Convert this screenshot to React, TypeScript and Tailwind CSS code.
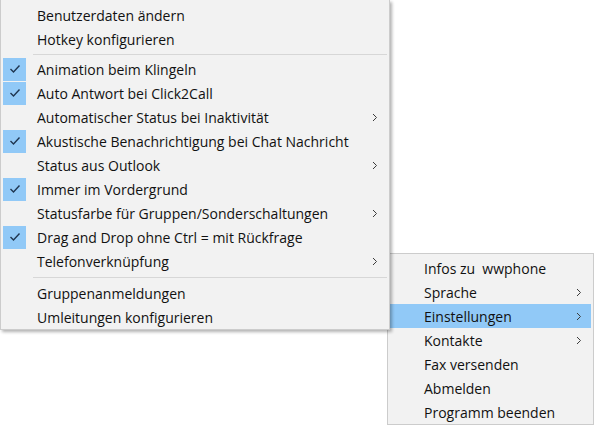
type Item =
	| { kind: "item"; label: string; checked?: boolean; sub?: boolean; active?: boolean }
	| { kind: "sep"; h: string };

const mainItems: Item[] = [
	{ kind: "item", label: "Benutzerdaten ändern" },
	{ kind: "item", label: "Hotkey konfigurieren" },
	{ kind: "sep", h: "h-[6px]" },
	{ kind: "item", label: "Animation beim Klingeln", checked: true },
	{ kind: "item", label: "Auto Antwort bei Click2Call", checked: true },
	{ kind: "item", label: "Automatischer Status bei Inaktivität", sub: true },
	{ kind: "item", label: "Akustische Benachrichtigung bei Chat Nachricht", checked: true },
	{ kind: "item", label: "Status aus Outlook", sub: true },
	{ kind: "item", label: "Immer im Vordergrund", checked: true },
	{ kind: "item", label: "Statusfarbe für Gruppen/Sonderschaltungen", sub: true },
	{ kind: "item", label: "Drag and Drop ohne Ctrl = mit Rückfrage", checked: true },
	{ kind: "item", label: "Telefonverknüpfung", sub: true },
	{ kind: "sep", h: "h-[8px]" },
	{ kind: "item", label: "Gruppenanmeldungen" },
	{ kind: "item", label: "Umleitungen konfigurieren" },
];

const rootItems: Item[] = [
	{ kind: "item", label: "Infos zu  wwphone" },
	{ kind: "item", label: "Sprache", sub: true },
	{ kind: "item", label: "Einstellungen", sub: true, active: true },
	{ kind: "item", label: "Kontakte", sub: true },
	{ kind: "item", label: "Fax versenden" },
	{ kind: "item", label: "Abmelden" },
	{ kind: "item", label: "Programm beenden" },
];

// small chevron used for submenu entries
const Chevron = () => (
	<svg width="6" height="9" viewBox="0 0 6 9" className="shrink-0">
		<path d="M1 1 L4.5 4.5 L1 8" fill="none" stroke="#3c3c3c" strokeWidth="1" />
	</svg>
);

const Check = () => (
	<svg width="12" height="10" viewBox="0 0 12 10">
		<path d="M1.5 5 L4.5 8 L10.5 1.5" fill="none" stroke="#1f3550" strokeWidth="1.4" />
	</svg>
);

export default function App() {
	return (
		<div
			className="relative w-[595px] h-[427px] bg-white overflow-hidden text-[#111]"
			style={{ fontFamily: '"Open Sans", "Noto Sans", sans-serif' }}
		>
			{/* root tray menu, sits behind the settings submenu */}
			<div className="absolute left-[387px] top-[253px] w-[207px] bg-[#f2f2f2] border border-[#cccccc] pt-[2px] px-[2px] z-0">
				{rootItems.map((it, i) =>
					it.kind === "item" ? (
						<div
							key={i}
							className={`flex items-center h-6 pl-[34px] pr-[9px] text-[14px] ${
								it.active ? "bg-[#91c9f7]" : ""
							}`}
						>
							<span className="flex-grow whitespace-pre pt-px">{it.label}</span>
							{it.sub && <Chevron />}
						</div>
					) : null
				)}
			</div>

			{/* settings submenu */}
			<div className="absolute left-0 top-0 w-[390px] bg-[#f2f2f2] border-l border-r border-b border-[#cccccc] pt-[3px] px-[2px] shadow-[2px_2px_3px_rgba(0,0,0,0.3)] z-10">
				{mainItems.map((it, i) =>
					it.kind === "sep" ? (
						<div key={i} className={`flex items-center ${it.h} pl-[30px]`}>
							<div className="h-px w-full bg-[#d7d7d7]"></div>
						</div>
					) : (
						<div key={i} className="flex items-center h-6 pr-[9px] text-[14px]">
							<div className="w-[23px] h-[23px] flex items-center justify-center">
								{it.checked && (
									<div className="w-[23px] h-[23px] bg-[#91c9f7] flex items-center justify-center">
										<Check />
									</div>
								)}
							</div>
							<span className="ml-[11px] flex-grow whitespace-nowrap pt-px">{it.label}</span>
							{it.sub && <Chevron />}
						</div>
					)
				)}
			</div>
		</div>
	);
}
